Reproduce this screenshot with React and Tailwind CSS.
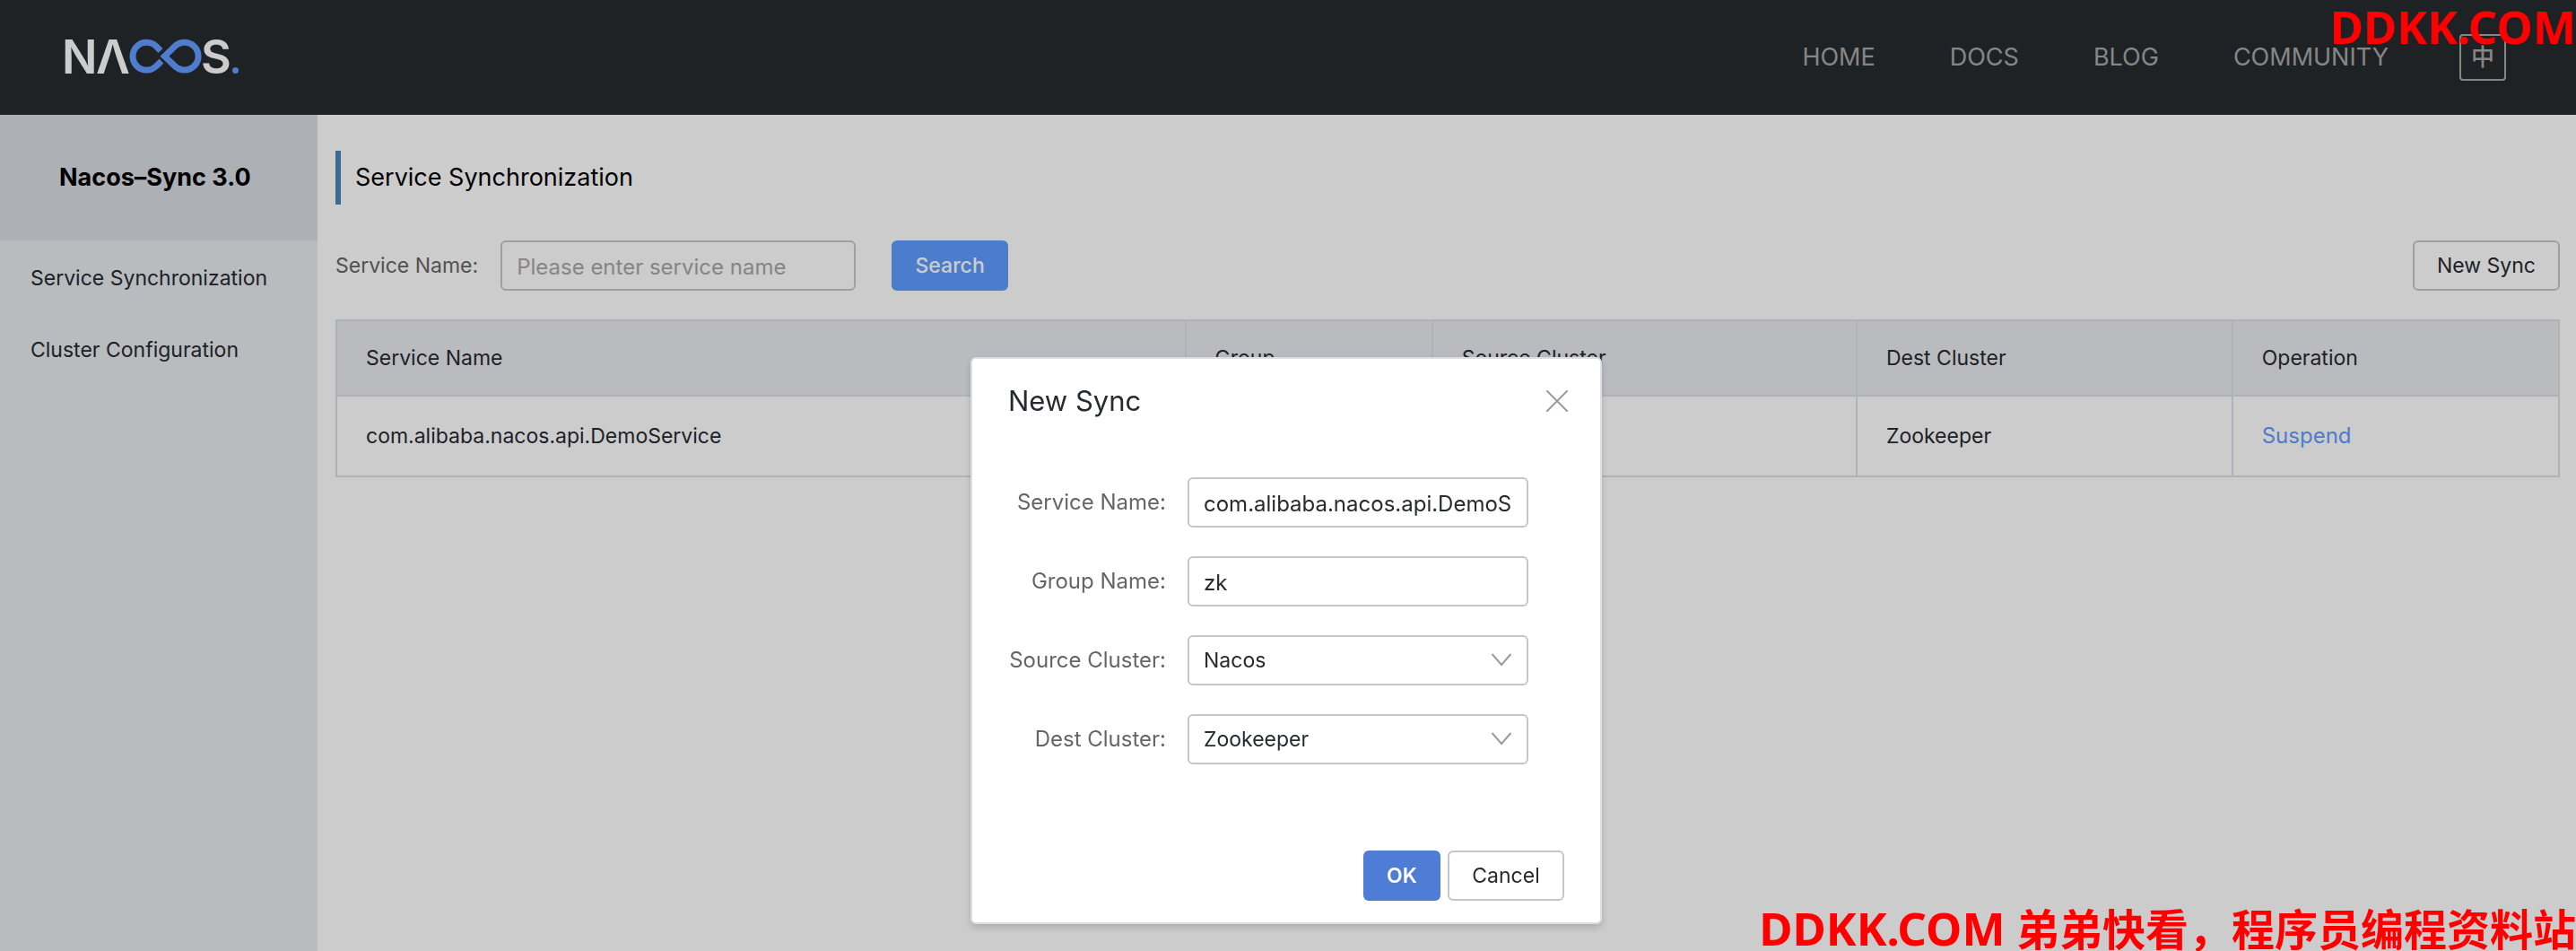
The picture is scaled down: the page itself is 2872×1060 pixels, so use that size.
import React, { useState } from 'react'

const navItems = ['HOME', 'DOCS', 'BLOG', 'COMMUNITY']
const menuItems = ['Service Synchronization', 'Cluster Configuration']

const columns = [
  { key: 'name', title: 'Service Name', width: 'w-[38.2%]' },
  { key: 'group', title: 'Group', width: 'w-[11.1%]' },
  { key: 'source', title: 'Source Cluster', width: 'w-[19.1%]' },
  { key: 'dest', title: 'Dest Cluster', width: 'w-[16.9%]' },
  { key: 'operation', title: 'Operation', width: 'w-[14.7%]' },
]

const rows = [{ name: 'com.alibaba.nacos.api.DemoService', dest: 'Zookeeper' }]

const Logo = () => (
  <svg width="206" height="72" viewBox="-5 -15 206 72" role="img" aria-label="Nacos" fontFamily="Inter, sans-serif" fontSize="52" fontWeight="600">
    <text x="-4" y="39" fill="#ffffff">N</text>
    <text x="34" y="39" fill="#ffffff">Λ</text>
    <text x="151" y="39" fill="#ffffff">S</text>
    <g fill="none" stroke="#639cff" strokeWidth="7">
      <path d="M106 13.5 L101.5 9 A15.4 15.4 0 1 0 101.5 30.4 L107 25" />
      <path d="M110.5 19.7 L121.8 8.8 A15.4 15.4 0 1 1 121.8 30.6 Z" />
    </g>
    <circle cx="189.5" cy="35.5" r="3.5" fill="#639cff" />
  </svg>
)

const Header = () => (
  <header className="flex h-32 items-center justify-between bg-[#262b2e] pl-[68px] pr-[78px]">
    <a href="#home"><Logo /></a>
    <nav className="flex items-center gap-[83px] text-[27px] text-[#aaa8a5]">
      {navItems.map((item) => (
        <a key={item} href={`#${item.toLowerCase()}`}>{item}</a>
      ))}
      <button className="-ml-1 size-[52px] rounded-sm border-2 border-[#aaa8a5] text-[26px] font-medium">中</button>
    </nav>
  </header>
)

const Sidebar = () => (
  <aside className="w-[354px] shrink-0 bg-[#e7ebee]">
    <h2 className="flex h-[140px] items-center bg-[#d9dce2] pl-[66px] text-[27px] font-bold text-black">Nacos–Sync 3.0</h2>
    <ul className="pt-0.5">
      {menuItems.map((item) => (
        <li key={item}>
          <a href="#menu" className="flex h-20 items-center pl-[34px]">{item}</a>
        </li>
      ))}
    </ul>
  </aside>
)

const ServiceTable = () => (
  <table className="mt-8 w-full table-fixed border-collapse border-2 border-[#dcdfe4] text-left">
    <thead>
      <tr className="h-[84px] bg-[#e9eaef]">
        {columns.map((col) => (
          <th key={col.key} className={`${col.width} border-2 border-[#dcdfe4] px-8 font-normal`}>{col.title}</th>
        ))}
      </tr>
    </thead>
    <tbody>
      {rows.map((row) => (
        <tr key={row.name} className="h-[90px]">
          <td className="border-2 border-[#dcdfe4] px-8">{row.name}</td>
          <td className="border-2 border-[#dcdfe4] px-8">{row.group}</td>
          <td className="border-2 border-[#dcdfe4] px-8">{row.source}</td>
          <td className="border-2 border-[#dcdfe4] px-8">{row.dest}</td>
          <td className="border-2 border-[#dcdfe4] px-8">
            <a href="#suspend" className="text-2xl text-[#609dff]">Suspend</a>
          </td>
        </tr>
      ))}
    </tbody>
  </table>
)

const FormRow = ({ id, label, children }) => (
  <div className="flex h-14 items-center gap-6">
    <label htmlFor={id} className="w-[176px] text-right text-2xl whitespace-nowrap text-[#666]">{label}</label>
    <div className="relative h-full flex-1">{children}</div>
  </div>
)

const Select = ({ id, value }) => (
  <>
    <select id={id} defaultValue={value} className="h-full w-full appearance-none rounded-md border-2 border-[#c6c6c6] bg-white px-4">
      <option>{value}</option>
    </select>
    <svg className="pointer-events-none absolute top-5 right-[18px]" width="24" height="16" viewBox="0 0 24 16" fill="none" stroke="#9b9b9b" strokeWidth="2">
      <path d="M1.5 1 L12 13 L22.5 1" />
    </svg>
  </>
)

const inputClass = 'h-full w-full rounded-md border-2 border-[#c6c6c6] px-4 pt-0.5 text-2xl'

const SyncDialog = () => {
  const [service, setService] = useState('com.alibaba.nacos.api.DemoService')
  const [group, setGroup] = useState('zk')

  return (
    <div
      role="dialog"
      aria-labelledby="dialog-title"
      className="w-[704px] rounded-md border-2 border-[#dcdee3] bg-white px-10 pb-6 shadow-[0_4px_8px_rgba(0,0,0,0.16)]"
    >
      <div className="flex h-[94px] items-center justify-between text-[31px]">
        <h3 id="dialog-title">New Sync</h3>
        <button aria-label="Close" className="-mr-1">
          <svg width="24" height="24" viewBox="0 0 24 24" stroke="#9b9b9b" strokeWidth="2" strokeLinecap="round">
            <path d="M1 1 L23 23 M23 1 L1 23" />
          </svg>
        </button>
      </div>

      <form className="mt-[38px] mr-10 flex flex-col gap-8">
        <FormRow id="service" label="Service Name:">
          <input id="service" value={service} onChange={(e) => setService(e.target.value)} className={inputClass} />
        </FormRow>
        <FormRow id="group" label="Group Name:">
          <input id="group" value={group} onChange={(e) => setGroup(e.target.value)} className={inputClass} />
        </FormRow>
        <FormRow id="source" label="Source Cluster:">
          <Select id="source" value="Nacos" />
        </FormRow>
        <FormRow id="dest" label="Dest Cluster:">
          <Select id="dest" value="Zookeeper" />
        </FormRow>
      </form>

      <div className="mt-24 flex justify-end gap-2">
        <button className="h-14 w-[86px] rounded-md bg-[#4f7dd6] font-semibold text-white">OK</button>
        <button className="h-14 w-[130px] rounded-md border-2 border-[#c6c6c6]">Cancel</button>
      </div>
    </div>
  )
}

const App = () => {
  return (
    <div className="flex min-h-screen flex-col bg-white font-[Inter,'Noto_Sans_CJK_SC',sans-serif] text-[23px] leading-8 text-[#272a30]">
      <Header />
      <div className="flex flex-1">
        <Sidebar />
        <main className="min-w-0 flex-1 pt-10 pr-[18px] pl-5">
          <h1 className="flex h-15 items-center border-l-[6px] border-[#4a85b9] pl-4 text-[27px] text-black">
            Service Synchronization
          </h1>
          <div className="mt-10 flex h-14 items-center">
            <label htmlFor="search" className="text-[#666]">Service Name:</label>
            <input
              id="search"
              placeholder="Please enter service name"
              className="ml-[25px] h-full w-[396px] rounded-md border-2 border-[#c7c7c7] px-4 pt-0.5 text-2xl placeholder:text-[#a9a7a5]"
            />
            <button className="ml-10 h-full w-[130px] rounded-md bg-[#609dff] font-medium text-white">Search</button>
            <button className="ml-auto h-full w-[164px] rounded-md border-2 border-[#c7c7c7]">New Sync</button>
          </div>
          <ServiceTable />
        </main>
      </div>

      {/* Dimmed backdrop with the dialog */}
      <div className="fixed inset-0 flex items-start justify-center bg-black/20 pt-[398px] pr-1">
        <SyncDialog />
      </div>

      {/* Watermarks */}
      <div className="pointer-events-none fixed inset-0 overflow-hidden font-['Noto_Sans','Noto_Sans_CJK_SC',sans-serif] text-5xl font-bold whitespace-nowrap text-[#ff0000]">
        <p className="absolute top-1 right-0 text-[51px]">DDKK.COM</p>
        <p className="absolute right-0 bottom-0">
          <span className="text-[51px]">DDKK.COM</span> 弟弟快看，程序员编程资料站
        </p>
      </div>
    </div>
  )
}

export default App
